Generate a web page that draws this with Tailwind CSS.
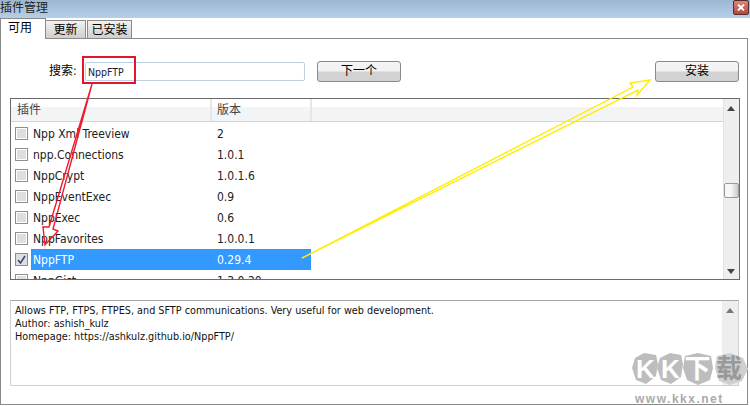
<!DOCTYPE html>
<html lang="en">
<head>
    <meta charset="UTF-8">
    <title>插件管理</title>
    <script src="https://cdn.jsdelivr.net/npm/@tailwindcss/browser@4"></script>
</head>
<body class="bg-white">
<div class="relative w-[750px] h-[406px] overflow-hidden bg-white font-['DejaVu_Sans_Condensed','Noto_Sans_CJK_SC',sans-serif] text-[12px] text-black">

    <!-- Title bar -->
    <div class="h-[18px] flex items-start justify-between bg-gradient-to-b from-[#9db7d3] to-[#b5cfe8]">
        <span class="text-[12px] leading-[17px] text-[#222]">插件管理</span>
        <div class="w-[16px] h-[15px] mr-[1px] flex items-center justify-center bg-gradient-to-b from-[#d9857a] to-[#b5483e] border border-[#5a2a2a] rounded-[2px]">
            <svg width="8" height="7" viewBox="0 0 8 7"><path d="M1 0.5l6 6M7 0.5l-6 6" fill="none" stroke="#fff" stroke-width="1.8"/></svg>
        </div>
    </div>

    <!-- Tabs -->
    <div class="flex h-[20px] items-end">
        <div class="relative z-10 w-[46px] h-[21px] mb-[-1px] bg-white border-x border-t border-[#8a8a8a] pl-[7px] leading-[18px]">可用</div>
        <div class="w-[40px] h-[18px] border-t border-r border-[#8a8a8a] bg-gradient-to-b from-[#f2f2f2] to-[#cfcfcf] text-center leading-[18px]">更新</div>
        <div class="w-[45px] h-[18px] ml-[1px] border-x border-t border-[#8a8a8a] bg-gradient-to-b from-[#f2f2f2] to-[#cfcfcf] text-center leading-[18px]">已安装</div>
    </div>

    <!-- Tab page -->
    <div class="h-[367px] w-[748px] border border-[#8a8a8a] pl-[9px]">
        <!-- Search row -->
        <div class="flex items-center h-[59px] pt-[5px]">
            <span class="ml-[39px] w-[33px] whitespace-nowrap">搜索:</span>
            <div class="w-[220px] h-[19px] ml-[3px] border border-[#bcd0e0] rounded-[2px] pl-[2px] text-[10.5px] leading-[18px] text-[#1a1a40]">NppFTP</div>
            <button class="w-[84px] h-[21px] ml-[12px] border border-[#8a8a8a] rounded-[3px] bg-[linear-gradient(#f3f3f3_45%,#d2d2d2_55%)] leading-none">下一个</button>
            <button class="w-[84px] h-[21px] ml-[254px] border border-[#8a8a8a] rounded-[3px] bg-[linear-gradient(#f3f3f3_45%,#d2d2d2_55%)] leading-none">安装</button>
        </div>

        <!-- Plugin list -->
        <div class="flex h-[182px] w-[730px] border border-[#6a6a6a] overflow-hidden">
            <div class="flex-1 min-w-0">
                <div class="flex h-[23px] border-b border-[#d5d5d5] bg-[linear-gradient(#ffffff_38%,#f3f4f6_38%)] text-[#444] leading-[23px]">
                    <div class="w-[201px] pl-[6px] border-r-2 border-[#e6e6e6]">插件</div>
                    <div class="w-[100px] pl-[5px] border-r-2 border-[#e6e6e6]">版本</div>
                </div>
                <div class="pl-[4px] pt-[1px] text-[#222]">
                    <div class="flex items-center h-[21px]"><span class="w-[13px] h-[13px] border border-[#8e8e8e] bg-[#dedede] shadow-[inset_0_0_0_1px_#fff]"></span><span class="w-[184px] ml-[5px]">Npp Xml Treeview</span><span>2</span></div>
                    <div class="flex items-center h-[21px]"><span class="w-[13px] h-[13px] border border-[#8e8e8e] bg-[#dedede] shadow-[inset_0_0_0_1px_#fff]"></span><span class="w-[184px] ml-[5px]">npp.Connections</span><span>1.0.1</span></div>
                    <div class="flex items-center h-[21px]"><span class="w-[13px] h-[13px] border border-[#8e8e8e] bg-[#dedede] shadow-[inset_0_0_0_1px_#fff]"></span><span class="w-[184px] ml-[5px]">NppCrypt</span><span>1.0.1.6</span></div>
                    <div class="flex items-center h-[21px]"><span class="w-[13px] h-[13px] border border-[#8e8e8e] bg-[#dedede] shadow-[inset_0_0_0_1px_#fff]"></span><span class="w-[184px] ml-[5px]">NppEventExec</span><span>0.9</span></div>
                    <div class="flex items-center h-[21px]"><span class="w-[13px] h-[13px] border border-[#8e8e8e] bg-[#dedede] shadow-[inset_0_0_0_1px_#fff]"></span><span class="w-[184px] ml-[5px]">NppExec</span><span>0.6</span></div>
                    <div class="flex items-center h-[21px]"><span class="w-[13px] h-[13px] border border-[#8e8e8e] bg-[#dedede] shadow-[inset_0_0_0_1px_#fff]"></span><span class="w-[184px] ml-[5px]">NppFavorites</span><span>1.0.0.1</span></div>
                    <div class="flex items-center h-[21px]">
                        <span class="w-[13px] h-[13px] border border-[#8e8e8e] bg-[#dedede] flex items-center justify-center"><svg width="9" height="9" viewBox="0 0 9 9"><path d="M1 5l2.5 3L8 1" fill="none" stroke="#3d4a86" stroke-width="1.6"/></svg></span>
                        <div class="flex items-center w-[280px] h-[21px] ml-[3px] pl-[2px] bg-[#3399ff] text-white outline-1 outline-dotted outline-offset-[-1px] outline-[#b5762e]"><span class="w-[184px]">NppFTP</span><span>0.29.4</span></div>
                    </div>
                    <div class="flex items-center h-[21px]"><span class="w-[13px] h-[13px] border border-[#8e8e8e] bg-[#dedede] shadow-[inset_0_0_0_1px_#fff]"></span><span class="w-[184px] ml-[5px]">NppGist</span><span>1.3.0.20</span></div>
                </div>
            </div>
            <!-- Scrollbar -->
            <div class="relative w-[16px] shrink-0 bg-[#eeeeee] border-l border-[#e2e2e2]">
                <svg class="absolute left-[3px] top-[7px]" width="8" height="5" viewBox="0 0 8 5"><path d="M4 0l4 5H0z" fill="#444"/></svg>
                <div class="absolute left-0 top-[84px] w-[15px] h-[15px] border border-[#9a9a9a] rounded-[2px] bg-[linear-gradient(to_right,#f7f7f7_45%,#c9c9cf)]"></div>
                <svg class="absolute left-[3px] bottom-[5px]" width="8" height="5" viewBox="0 0 8 5"><path d="M0 0h8L4 5z" fill="#444"/></svg>
            </div>
        </div>

        <!-- Description -->
        <div class="flex w-[729px] h-[86px] mt-[20px] border border-[#d0d0d0] border-t-[#a8a8a8]">
            <div class="flex-1 pl-[4px] pt-[3px] text-[10.75px] leading-[13px] text-[#111]">
                <div>Allows FTP, FTPS, FTPES, and SFTP communications. Very useful for web development.</div>
                <div>Author: ashish_kulz</div>
                <div>Homepage: https://ashkulz.github.io/NppFTP/</div>
            </div>
            <div class="relative w-[16px] shrink-0 bg-[#eeeeee]">
                <svg class="absolute left-[4px] top-[7px]" width="8" height="5" viewBox="0 0 8 5"><path d="M4 0l4 5H0z" fill="#777"/></svg>
                <svg class="absolute left-[4px] bottom-[7px]" width="8" height="5" viewBox="0 0 8 5"><path d="M0 0h8L4 5z" fill="#777"/></svg>
            </div>
        </div>
    </div>

    <!-- Red highlight box over the search field -->
    <div class="absolute left-[82px] top-[56px] w-[54px] h-[28px] border-2 border-[#e0162b]"></div>

    <!-- Annotation arrows -->
    <svg class="absolute left-0 top-0 pointer-events-none" width="750" height="406" viewBox="0 0 750 406">
        <path d="M92 84L49 227L43 227L45 245L58 231L53 229Z" fill="none" stroke="#ee1c2e" stroke-width="1.4"/>
        <path d="M302 258L633 87L630 83L650 80L637 95L638 90Z" fill="none" stroke="#ffee00" stroke-width="1.4"/>
    </svg>

    <!-- Watermark -->
    <svg class="absolute left-[630px] top-[350px]" width="120" height="38" viewBox="0 0 120 38">
        <path d="M5 8L14 3L26 5L28 14L26 26L16 34L6 30L2 18Z" fill="#bdbdbd"/>
        <path d="M30 8L40 3L51 5L53 14L51 27L41 34L31 30L27 18Z" fill="#bdbdbd"/>
        <path d="M55 6L68 3L81 6L83 18L80 30L68 35L57 30L53 18Z" fill="#bdbdbd"/>
        <path d="M87 6L100 3L113 8L118 19L112 31L100 35L89 31L85 18Z" fill="#cfcfcf"/>
    </svg>
    <div class="absolute left-[633px] top-[353px] w-[117px] h-[31px] flex items-center text-[26px] font-bold leading-none font-['Liberation_Sans','Noto_Sans_CJK_SC',sans-serif]">
        <span class="w-[25px] text-center text-white">K</span>
        <span class="w-[25px] text-center text-white">K</span>
        <span class="w-[29px] text-center text-white">下</span>
        <span class="w-[34px] text-center text-[#999]">载</span>
    </div>
    <div class="absolute left-[635px] top-[392px] font-['Liberation_Sans',sans-serif] text-[12px] leading-[14px] font-bold text-[#aaa] tracking-[1.5px]">www.kkx.net</div>
</div>
</body>
</html>
